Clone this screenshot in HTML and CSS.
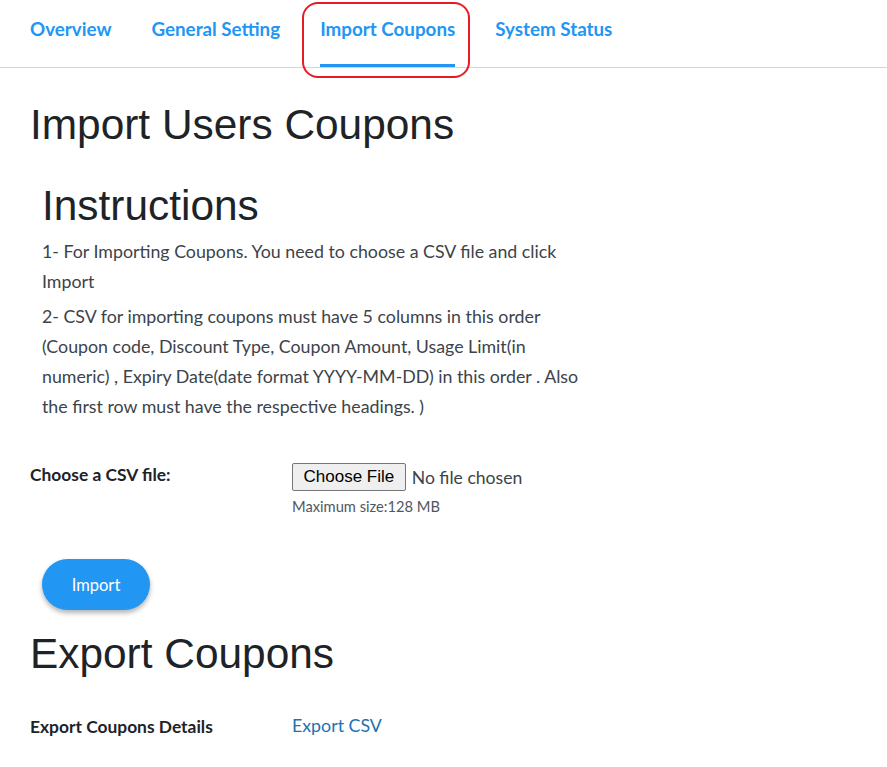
FILE: index.html
```html
<!DOCTYPE html>
<html lang="en">
<head>
<meta charset="utf-8">
<title>Import Coupons</title>
<link rel="stylesheet" href="styles.css">
</head>
<body>
<nav class="tabs">
  <a class="tab" href="#">Overview</a>
  <a class="tab" href="#">General Setting</a>
  <a class="tab active" href="#">Import Coupons<span class="highlight"></span></a>
  <a class="tab" href="#">System Status</a>
</nav>
<main class="content">
  <h1 class="title">Import Users Coupons</h1>
  <section class="instructions">
    <h2 class="title">Instructions</h2>
    <p>1- For Importing Coupons. You need to choose a CSV file and click Import</p>
    <p>2- CSV for importing coupons must have 5 columns in this order (Coupon code, Discount Type, Coupon Amount, Usage Limit(in numeric) , Expiry Date(date format YYYY-MM-DD) in this order . Also the first row must have the respective headings. )</p>
  </section>
  <div class="form-row">
    <div class="label">Choose a CSV file:</div>
    <div class="field">
      <div class="file">
        <button class="file-btn" type="button">Choose File</button>
        <span class="file-name">No file chosen</span>
      </div>
      <div class="hint">Maximum size:128 MB</div>
    </div>
  </div>
  <button class="import-btn" type="button">Import</button>
  <h1 class="title export-title">Export Coupons</h1>
  <div class="form-row export-row">
    <div class="label">Export Coupons Details</div>
    <div class="field"><a class="link" href="#">Export CSV</a></div>
  </div>
</main>
</body>
</html>
```
FILE: styles.css
```css
html, body {
  margin: 0;
  padding: 0;
  background: #fff;
}
body {
  font-family: Lato, "Open Sans", sans-serif;
  color: #32373c;
}
.tabs {
  display: flex;
  gap: 40px;
  padding-left: 30px;
  height: 67px;
  border-bottom: 1px solid #d4d4d4;
}
.tab {
  position: relative;
  display: flex;
  align-items: center;
  padding-bottom: 7px;
  font-size: 18.8px;
  font-weight: 700;
  color: #2196f3;
  text-decoration: none;
  border-bottom: 3px solid transparent;
  box-sizing: border-box;
  height: 67px;
}
.tab.active {
  border-bottom-color: #2196f3;
}
.tab .highlight {
  position: absolute;
  left: -18px;
  right: -15px;
  top: 2px;
  bottom: -14px;
  border: 2px solid #e51c23;
  border-radius: 16px;
}
.content {
  padding-left: 30px;
}
.title {
  font-family: "Liberation Sans", Arial, sans-serif;
  font-weight: 400;
  font-size: 42.4px;
  color: #1d2327;
  margin: 0;
  line-height: 48px;
}
.content > h1.title {
  margin-top: 33px;
}
.instructions {
  padding-left: 12px;
  width: 540px;
  margin-top: 33px;
}
.instructions p {
  font-size: 17.8px;
  line-height: 30px;
  margin: 5px 0 0;
  color: #3c434a;
}
.instructions h2 + p {
  margin-top: 6px;
}
.form-row {
  display: flex;
  margin-top: 42px;
}
.label {
  width: 262px;
  font-size: 17.4px;
  font-weight: 700;
  color: #1d2327;
  padding-top: 1px;
}
.file {
  display: flex;
  align-items: center;
  gap: 6px;
}
.file-btn {
  font-family: "Liberation Sans", Arial, sans-serif;
  font-size: 17px;
  color: #000;
  background: #efefef;
  border: 1px solid #767676;
  border-radius: 2px;
  height: 28px;
  padding: 0 10.5px;
}
.file-name {
  font-size: 17.6px;
  color: #3c434a;
}
.hint {
  font-size: 14.7px;
  color: #50575e;
  margin-top: 6px;
}
.import-btn {
  display: block;
  margin: 44px 0 0 12px;
  width: 108px;
  height: 51px;
  border: none;
  border-radius: 26px;
  background: #2196f3;
  color: #fff;
  font-family: Lato, "Open Sans", sans-serif;
  font-size: 16.5px;
  box-shadow: 0 3px 5px rgba(0,0,0,0.3);
}
.content > h1.export-title {
  margin-top: 20px;
}
.export-row {
  margin-top: 36px;
}
.export-row .label {
  padding-top: 2px;
}
.link {
  font-size: 17.8px;
  color: #2271b1;
  text-decoration: none;
}
```
